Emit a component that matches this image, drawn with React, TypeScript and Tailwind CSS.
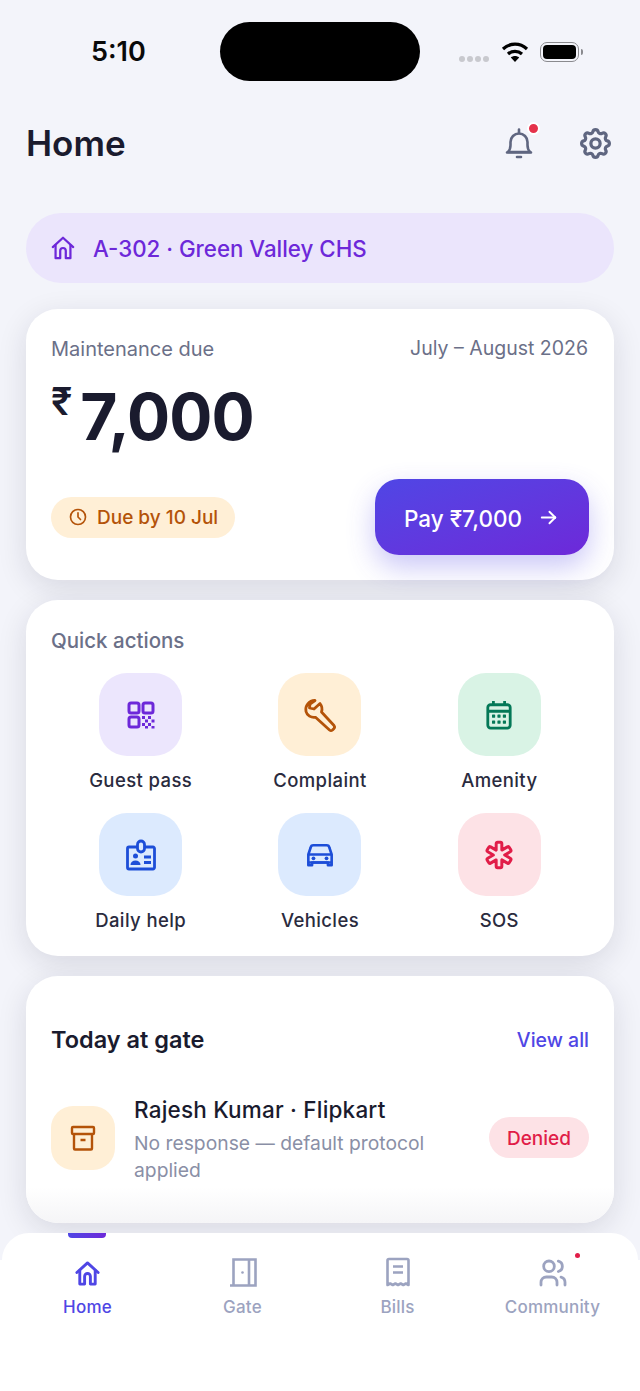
import React from 'react';
import { TbSettings, TbClock, TbArrowRight, TbMedicalCross, TbUsers } from 'react-icons/tb';

const font = { fontFamily: 'Inter, "Noto Sans", sans-serif' };

const HomeIcon = ({ size, width }: { size: number; width: number }) => (
  <svg width={size} height={size} viewBox="0 0 28 28" fill="none" stroke="currentColor" strokeWidth={width} strokeLinejoin="round" strokeLinecap="round">
    <path d="M3 13 14 3l11 10" />
    <path d="M6 11v14h5v-8a3 3 0 0 1 6 0v8h5V11" />
  </svg>
);

const BellIcon = () => (
  <svg width="36" height="36" viewBox="0 0 36 36" fill="none" stroke="#5f6680" strokeWidth="2.600" strokeLinecap="round" strokeLinejoin="round">
    <path d="M7 27c2-2 2.500-4 2.500-7v-3a8.500 8.500 0 0 1 17 0v3c0 3 .5 5 2.500 7z" />
    <path d="M6 27.500h24M18 8V4.500M16 32h4" />
  </svg>
);

const QrIcon = () => (
  <svg width="30" height="30" viewBox="0 0 30 30" fill="none" stroke="#6d28d9" strokeWidth="3">
    <rect x="3" y="3" width="10" height="10" rx="2" />
    <rect x="17" y="3" width="10" height="10" rx="2" />
    <rect x="3" y="17" width="10" height="10" rx="2" />
    <g fill="#6d28d9" stroke="none">
      <rect x="16" y="16" width="3" height="3" />
      <rect x="22" y="16" width="3" height="3" />
      <rect x="19" y="19.500" width="3" height="3" />
      <rect x="25.500" y="19.500" width="3" height="3" />
      <rect x="16" y="23" width="3" height="3" />
      <rect x="22" y="23" width="3" height="3" />
      <rect x="19" y="26" width="3" height="2.500" />
      <rect x="25.500" y="26" width="3" height="2.500" />
    </g>
  </svg>
);

const WrenchIcon = () => (
  <svg width="36" height="36" viewBox="0 0 36 36" fill="none" stroke="#b45309" strokeWidth="2.800" strokeLinejoin="round">
    <path d="M13 3.500a9 9 0 0 0-9 11c1 4 5 6.500 9.500 5.800L27.500 33c1 .8 2 .8 3 0l1.500-1.500c.8-1 .8-2 0-3L19.500 15c1-3 .5-6-1.500-8.500l-6 5.500-4.500-1 .5-4z" />
  </svg>
);

const CalendarIcon = () => (
  <svg width="28" height="30" viewBox="0 0 30 32" fill="none" stroke="#047857" strokeWidth="3">
    <rect x="3" y="5" width="24" height="25" rx="3" />
    <path d="M3 12h24M9 1v5M21 1v5" />
    <g fill="#047857" stroke="none">
      <rect x="7.500" y="15.500" width="3.400" height="3.400" rx="0.500" />
      <rect x="13.300" y="15.500" width="3.400" height="3.400" rx="0.500" />
      <rect x="19.100" y="15.500" width="3.400" height="3.400" rx="0.500" />
      <rect x="7.500" y="22" width="3.400" height="3.400" rx="0.500" />
      <rect x="13.300" y="22" width="3.400" height="3.400" rx="0.500" />
      <rect x="19.100" y="22" width="3.400" height="3.400" rx="0.500" />
    </g>
  </svg>
);

const BadgeIcon = () => (
  <svg width="32" height="32" viewBox="0 0 32 32" fill="none" stroke="#1d4ed8" strokeWidth="2.800">
    <path d="M12 8H4a1.500 1.500 0 0 0-1.500 1.500v19A1.500 1.500 0 0 0 4 30h24a1.500 1.500 0 0 0 1.500-1.500v-19A1.500 1.500 0 0 0 28 8h-8" />
    <rect x="12.500" y="2" width="7" height="11" rx="3.500" />
    <circle cx="10.500" cy="17" r="2.500" fill="#1d4ed8" stroke="none" />
    <path d="M5.500 26c0-3 2.200-4.500 5-4.500s5 1.500 5 4.500z" fill="#1d4ed8" stroke="none" />
    <path d="M19 18h7M19 23.500h7" />
  </svg>
);

const CarIcon = () => (
  <svg width="28" height="28" viewBox="0 0 30 30" fill="none" stroke="#1d4ed8" strokeWidth="2.800" strokeLinejoin="round">
    <path d="M2.500 14.500 5 7a3 3 0 0 1 3-2.500h14A3 3 0 0 1 25 7l2.500 7.500V26h-4v-3h-17v3h-4z" fill="none" />
    <path d="M2.500 14.500h25M2.500 23h25" />
    <circle cx="8" cy="18.500" r="2" fill="#1d4ed8" stroke="none" />
    <circle cx="22" cy="18.500" r="2" fill="#1d4ed8" stroke="none" />
  </svg>
);

const BoxIcon = () => (
  <svg width="26" height="28" viewBox="0 0 26 28" fill="none" stroke="#b45309" strokeWidth="2.400" strokeLinejoin="round">
    <rect x="2" y="3" width="22" height="7" rx="1" />
    <path d="M4 10v14.500a1 1 0 0 0 1 1h16a1 1 0 0 0 1-1V10M10.500 16h5" />
  </svg>
);

const DoorIcon = () => (
  <svg width="30" height="30" viewBox="0 0 30 30" fill="none" stroke="#9ca3c0" strokeWidth="2.600">
    <path d="M2 28.500h20M5.500 28.500V2.500h22v26h-6.500V2.500" />
    <circle cx="14.500" cy="15.500" r="1.300" fill="#9ca3c0" stroke="none" />
  </svg>
);

const ReceiptIcon = () => (
  <svg width="30" height="30" viewBox="0 0 30 30" fill="none" stroke="#9ca3c0" strokeWidth="2.600" strokeLinejoin="round">
    <path d="M4.500 28V3.500a1.500 1.500 0 0 1 1.500-1.500h18a1.500 1.500 0 0 1 1.500 1.500V28l-2.600-1.500-2.600 1.500-2.600-1.500-2.700 1.500-2.600-1.500-2.600 1.500-2.600-1.500z" />
    <path d="M10 9.500h10M10 15.500h10" />
  </svg>
);

const actions = [
  { label: 'Guest pass', bg: 'bg-[#ece6fd]', icon: <QrIcon /> },
  { label: 'Complaint', bg: 'bg-[#ffefd6]', icon: <WrenchIcon /> },
  { label: 'Amenity', bg: 'bg-[#d9f3e5]', icon: <CalendarIcon /> },
  { label: 'Daily help', bg: 'bg-[#dceafe]', icon: <BadgeIcon /> },
  { label: 'Vehicles', bg: 'bg-[#dceafe]', icon: <CarIcon /> },
  { label: 'SOS', bg: 'bg-[#fde2e6]', icon: <TbMedicalCross size={34} color="#e11d48" strokeWidth={2.100} /> },
];

const cardClass = 'rounded-[32px] bg-white shadow-[0_8px_30px_rgba(26,27,46,0.12)]';

const App: React.FC = () => {
  return (
    <div className="relative flex h-[1391px] w-[640px] flex-col overflow-hidden bg-[#f3f4fa] text-[#1a1b2e]" style={font}>
      {/* status bar */}
      <div className="relative h-[104px] shrink-0">
        <span className="absolute left-[91px] top-[36px] text-[27px] font-semibold leading-[32px] text-[#0a0a0a]">5:10</span>
        <div className="absolute left-[220px] top-[22px] h-[59px] w-[200px] rounded-full bg-black" />
        <div className="absolute left-[459px] top-[56px] flex gap-[2px]">
          <span className="h-[6px] w-[6px] rounded-full bg-[#c8c9ce]" />
          <span className="h-[6px] w-[6px] rounded-full bg-[#c8c9ce]" />
          <span className="h-[6px] w-[6px] rounded-full bg-[#c8c9ce]" />
          <span className="h-[6px] w-[6px] rounded-full bg-[#c8c9ce]" />
        </div>
        <svg className="absolute left-[501px] top-[41px]" width="28" height="22" viewBox="0 0 28 22" fill="none" stroke="#000" strokeWidth="3.200">
          <path d="M2 8c7-6.500 17-6.500 24 0" />
          <path d="M7 13c4-3.500 10-3.500 14 0" />
          <path d="M9.800 16.500 14 21l4.200-4.500c-2.500-2-5.900-2-8.400 0z" fill="#000" stroke="none" />
        </svg>
        <div className="absolute left-[540px] top-[42px] flex h-[20px] w-[39px] items-center justify-center rounded-[7px] border-[1.500px] border-[#8a8a8e]">
          <div className="h-[14px] w-[33px] rounded-[4px] bg-black" />
        </div>
        <div className="absolute left-[581px] top-[49px] h-[6px] w-[2px] rounded-r-full bg-[#8a8a8e]" />
      </div>

      {/* header */}
      <div className="flex h-[78px] shrink-0 items-center justify-between px-[26px]">
        <h1 className="text-[35px] font-semibold leading-none">Home</h1>
        <div className="flex items-center gap-[40px]">
          <div className="relative">
            <BellIcon />
            <span className="absolute right-[-3px] top-[-3px] h-[13px] w-[13px] rounded-full border-2 border-white bg-[#e5324b]" />
          </div>
          <TbSettings size={37} color="#5f6680" strokeWidth={2.100} />
        </div>
      </div>

      <div className="flex flex-col gap-[20px] px-[26px] pt-[31px]">
        {/* unit pill */}
        <div className="mb-[6px] flex h-[70px] items-center gap-[17px] rounded-full bg-[#ebe5fc] px-[24px] text-[#6d28d9]">
          <HomeIcon size={26} width={2.400} />
          <span className="pt-[1px] text-[22.300px] font-medium">A-302 · Green Valley CHS</span>
        </div>

        {/* maintenance */}
        <div className={`${cardClass} h-[271px] px-[25px] pt-[25px]`}>
          <div className="flex items-center justify-between text-[#6b7088]">
            <span className="text-[20px]">Maintenance due</span>
            <span className="pr-[1px] text-[19.500px]">July – August 2026</span>
          </div>
          <div className="mt-[13px] flex items-start">
            <span className="mt-[4px] text-[38px] font-semibold leading-[40px]">₹</span>
            <span className="ml-[8px] text-[64px] font-bold leading-[80px] tracking-[-1px]">7,000</span>
          </div>
          <div className="mt-[22px] flex items-center justify-between">
            <div className="flex h-[41px] items-center gap-[9px] rounded-full bg-[#ffefd6] px-[17px] text-[#b45309]">
              <TbClock size={20} strokeWidth={2} />
              <span className="pt-[3px] text-[19px] font-medium">Due by 10 Jul</span>
            </div>
            <button className="flex h-[76px] w-[214px] items-center justify-center gap-[15px] rounded-[24px] bg-gradient-to-br from-[#4f46e5] to-[#6d28d9] text-white shadow-[0_12px_28px_rgba(79,70,229,0.3)]">
              <span className="pt-[3px] text-[22.500px] font-medium">Pay ₹7,000</span>
              <TbArrowRight size={23} strokeWidth={2} />
            </button>
          </div>
        </div>

        {/* quick actions */}
        <div className={`${cardClass} h-[356px] px-[25px] pt-[29px]`}>
          <p className="text-[20.500px] font-medium leading-[24px] text-[#6b7088]">Quick actions</p>
          <div className="mt-[20px] grid grid-cols-3 gap-y-[21px]">
            {actions.map((a) => (
              <div key={a.label} className="flex flex-col items-center">
                <div className={`flex h-[83px] w-[83px] items-center justify-center rounded-[28px] ${a.bg}`}>{a.icon}</div>
                <span className="mt-[12px] text-[18.500px] font-medium leading-[24px] tracking-[0.4px] text-[#2a2b3e]">{a.label}</span>
              </div>
            ))}
          </div>
        </div>

        {/* today at gate */}
        <div className={`${cardClass} relative h-[247px] overflow-hidden px-[25px] pt-[48px]`}>
          <div className="flex items-center justify-between">
            <h2 className="text-[23.500px] font-semibold leading-[30px]">Today at gate</h2>
            <span className="mt-[2px] text-[19.500px] font-medium text-[#4f46e5]">View all</span>
          </div>
          <div className="relative z-10 mt-[50px] flex items-start gap-[19px]">
            <div className="mt-[1px] flex h-[64px] w-[64px] shrink-0 items-center justify-center rounded-[22px] bg-[#ffefd6]">
              <BoxIcon />
            </div>
            <div className="-mt-[9px] w-[320px]">
              <p className="text-[22.500px] font-medium leading-[28px] tracking-[0.2px]">Rajesh Kumar · Flipkart</p>
              <p className="mt-[6px] text-[19.300px] leading-[27px] text-[#8a8fa6]">No response — default protocol applied</p>
            </div>
            <span className="ml-auto mt-[12px] flex h-[41px] items-center rounded-full bg-[#fde2e6] px-[18px] pt-[3px] text-[19px] font-medium text-[#e11d48]">Denied</span>
          </div>
          <div className="absolute inset-x-0 bottom-0 h-[36px] bg-gradient-to-b from-white to-[#f5f5f7]" />
        </div>
      </div>

      {/* bottom nav */}
      <div className="absolute inset-x-0 bottom-0 h-[131px] bg-white" />
      <div className="absolute bottom-[131px] left-[2px] right-[2px] h-[27px] rounded-t-[28px] bg-white" />
      <div className="absolute left-[68px] top-[1233px] h-[5px] w-[38px] rounded-b-[4px] bg-gradient-to-r from-[#4f46e5] to-[#6d28d9]" />
      <nav className="absolute inset-x-0 top-[1257px] grid grid-cols-4 px-[10px] text-[17px] font-medium leading-[24px] tracking-[0.2px] text-[#9ca3c0]">
        <div className="flex flex-col items-center text-[#4f46e5]">
          <div className="flex h-[30px] items-end">
            <HomeIcon size={27} width={3} />
          </div>
          <span className="mt-[8px]">Home</span>
        </div>
        <div className="flex flex-col items-center">
          <DoorIcon />
          <span className="mt-[8px]">Gate</span>
        </div>
        <div className="flex flex-col items-center">
          <ReceiptIcon />
          <span className="mt-[8px]">Bills</span>
        </div>
        <div className="relative flex flex-col items-center">
          <TbUsers size={32} strokeWidth={2.100} />
          <span className="mt-[6px]">Community</span>
          <span className="absolute left-[100px] top-[-4px] h-[5px] w-[5px] rounded-full bg-[#e11d48]" />
        </div>
      </nav>
    </div>
  );
};

export default App;
